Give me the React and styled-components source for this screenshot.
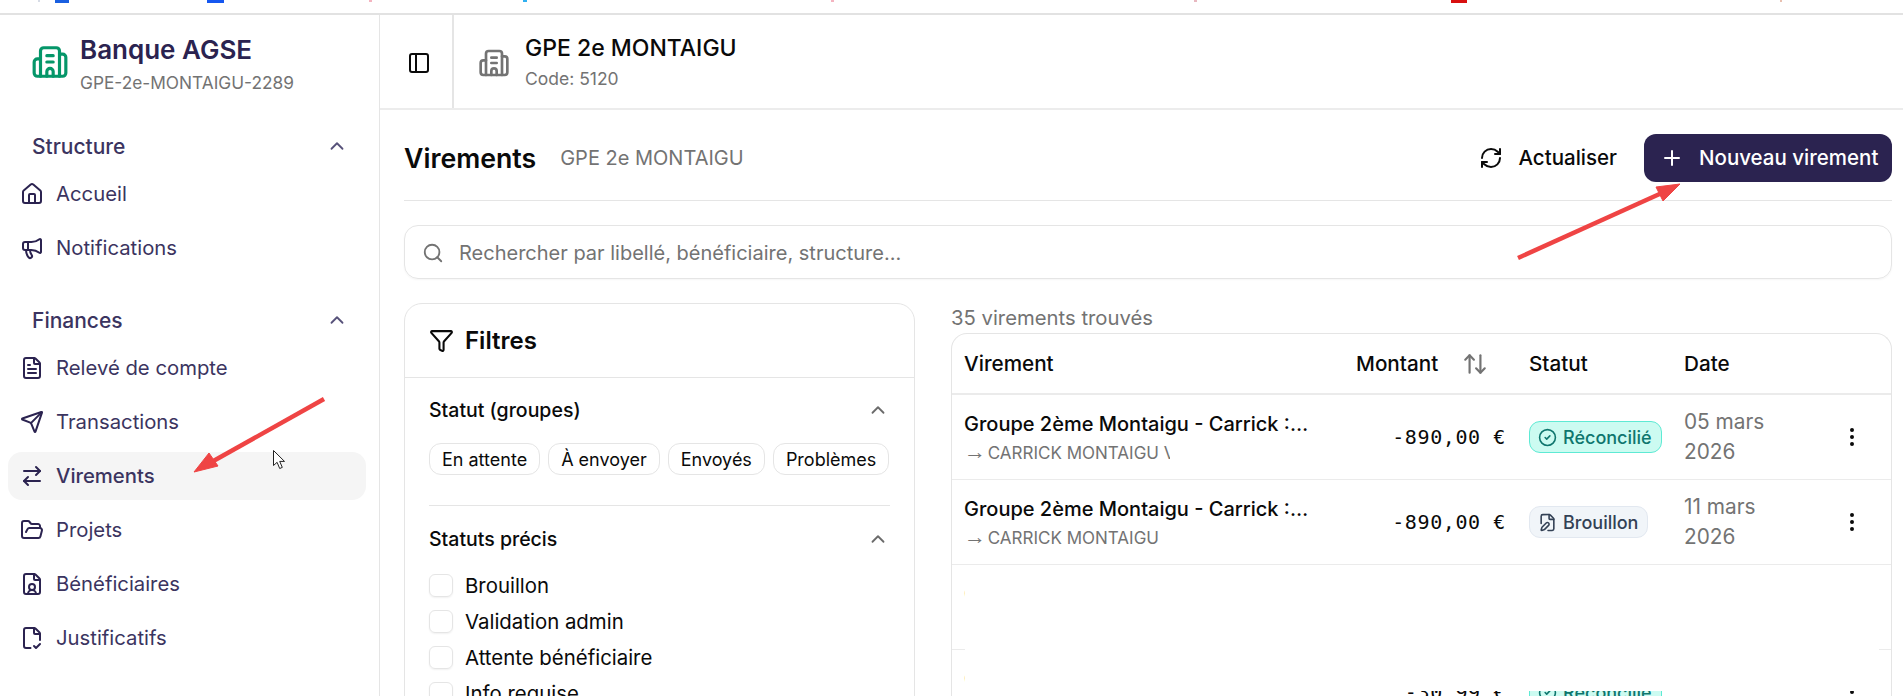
import React from 'react';
import styled, {createGlobalStyle} from 'styled-components';
import {
  ArrowRightLeft,
  ArrowUpDown,
  Building2,
  ChevronUp,
  CircleCheck,
  EllipsisVertical,
  FileCheck2,
  FilePen,
  FileText,
  FileUser,
  FolderOpen,
  Funnel,
  House,
  Megaphone,
  PanelLeft,
  Plus,
  RefreshCw,
  Search,
  Send,
} from 'lucide-react';

const ink = '#2b2350';
const line = '#e5e5e5';
const muted = '#737373';

const GlobalStyle = createGlobalStyle`
  html, body {
    margin: 0;
    height: 696px;
    overflow: hidden;
    background: #fff;
    font-family: Inter, "Noto Sans", sans-serif;
    color: #0a0a0a;
  }
  * { box-sizing: border-box; }
`;

const Page = styled.div`
  position: relative;
  width: 1903px;
  height: 696px;
  overflow: hidden;
`;

// what is left of the browser bookmark bar above the capture
const Strip = styled.div`
  position: relative;
  height: 15px;
  border-bottom: 2px solid #e2e2e2;
`;

const StripMark = styled.span`
  position: absolute;
  top: 0;
  height: ${(p) => (p.$w > 5 ? 3 : 2)}px;
  left: ${(p) => p.$x}px;
  width: ${(p) => p.$w}px;
  background: ${(p) => p.$color};
`;

const Shell = styled.div`
  display: flex;
  height: 681px;
`;

const Sidebar = styled.aside`
  width: 380px;
  flex: none;
  border-right: 1px solid ${line};
  padding: 0 13px 0 8px;
`;

const Brand = styled.div`
  height: 111px;
  display: flex;
  gap: 11px;
  padding: 20px 0 0 23px;
  color: #059669;
  svg {
    margin-top: 8px;
  }
`;

const BrandName = styled.div`
  font-size: 26px;
  font-weight: 600;
  line-height: 30px;
  color: ${ink};
`;

const BrandCode = styled.div`
  font-size: 17.3px;
  line-height: 24px;
  margin-top: 6px;
  color: ${muted};
`;

const SectionLabel = styled.div`
  height: 40px;
  margin: ${(p) => (p.$first ? '0' : '28px')} 0 4px;
  padding: 0 18px 0 24px;
  display: flex;
  align-items: center;
  justify-content: space-between;
  font-size: 21px;
  font-weight: 500;
  color: #3b3460;
  svg {
    color: #57527a;
  }
`;

const NavList = styled.div`
  display: flex;
  flex-direction: column;
  gap: 6px;
`;

const NavItem = styled.div`
  height: 48px;
  display: flex;
  align-items: center;
  gap: 12px;
  padding: 0 0 1px 12px;
  border-radius: 14px;
  font-size: 20.3px;
  color: #3b3460;
  background: ${(p) => (p.$active ? '#f5f5f5' : 'transparent')};
  font-weight: ${(p) => (p.$active ? 500 : 400)};
  svg {
    color: ${ink};
  }
`;

const Main = styled.main`
  flex: 1;
  min-width: 0;
`;

const TopBar = styled.header`
  height: 95px;
  display: flex;
  align-items: stretch;
  border-bottom: 2px solid #ececec;
`;

const ToggleCell = styled.div`
  width: 74px;
  display: flex;
  align-items: center;
  justify-content: center;
  border-right: 2px solid ${line};
  padding: 2px 0 0 6px;
`;

const TopBarInfo = styled.div`
  display: flex;
  gap: 15px;
  padding: 2px 0 0 24px;
  align-items: center;
  svg {
    color: ${muted};
  }
`;

const TopBarTitle = styled.div`
  font-size: 23px;
  font-weight: 500;
  line-height: 28px;
`;

const TopBarCode = styled.div`
  font-size: 17.5px;
  line-height: 24px;
  margin-top: 5px;
  color: ${muted};
`;

const Content = styled.div`
  padding: 0 11px 0 24px;
`;

const TitleRow = styled.div`
  height: 91px;
  padding-top: 24px;
  padding-bottom: 19px;
  display: flex;
  align-items: center;
  border-bottom: 1px solid ${line};
`;

const PageTitle = styled.h1`
  margin: 0;
  font-size: 26.7px;
  font-weight: 600;
`;

const PageSub = styled.span`
  margin-left: 24px;
  font-size: 20px;
  color: ${muted};
`;

const RefreshButton = styled.button`
  margin-left: auto;
  height: 48px;
  border: 0;
  background: none;
  display: flex;
  align-items: center;
  gap: 16px;
  padding: 0;
  font: 500 20.5px Inter, sans-serif;
  color: #0a0a0a;
`;

const PrimaryButton = styled.button`
  margin-left: 27px;
  width: 248px;
  height: 48px;
  border: 0;
  border-radius: 12px;
  background: ${ink};
  color: #fff;
  display: flex;
  align-items: center;
  gap: 15px;
  padding: 0 0 0 16px;
  font: 500 20.5px Inter, sans-serif;
  white-space: nowrap;
`;

const SearchBox = styled.div`
  margin-top: 24px;
  height: 54px;
  border: 1px solid ${line};
  border-radius: 14px;
  box-shadow: 0 1px 2px rgba(0, 0, 0, 0.04);
  display: flex;
  align-items: center;
  gap: 15px;
  padding: 1px 0 0 17px;
  font-size: 20px;
  color: ${muted};
`;

const Columns = styled.div`
  margin-top: 24px;
  display: flex;
  gap: 36px;
  align-items: flex-start;
`;

const FilterCard = styled.section`
  width: 511px;
  flex: none;
  height: 500px;
  border: 1px solid ${line};
  border-radius: 18px;
`;

const FilterHead = styled.div`
  height: 74px;
  padding-left: 24px;
  display: flex;
  align-items: center;
  gap: 11px;
  border-bottom: 1px solid ${line};
  font-size: 24px;
  font-weight: 600;
`;

const FilterBody = styled.div`
  padding: 0 24px;
`;

const FilterGroup = styled.div`
  padding: ${(p) => (p.$last ? 19 : 18)}px 0 30px;
  border-bottom: ${(p) => (p.$last ? 'none' : `1px solid ${line}`)};
`;

const GroupTitle = styled.div`
  height: 28px;
  padding-right: 1px;
  display: flex;
  align-items: center;
  justify-content: space-between;
  font-size: 19.5px;
  font-weight: 500;
  margin-bottom: 19px;
  svg {
    color: #6b6b6b;
  }
`;

const ChipRow = styled.div`
  display: flex;
  gap: 8px;
`;

const Chip = styled.span`
  height: 32px;
  padding: 0 12px;
  display: flex;
  align-items: center;
  border: 1px solid ${line};
  border-radius: 12px;
  font-size: 18px;
  white-space: nowrap;
`;

const CheckList = styled.div`
  display: flex;
  flex-direction: column;
  gap: 13px;
  padding-top: 2px;
`;

const CheckRow = styled.label`
  height: 23px;
  display: flex;
  align-items: center;
  gap: 12px;
  font-size: 20.4px;
`;

const CheckBox = styled.span`
  width: 24px;
  height: 23px;
  flex: none;
  border: 1px solid ${line};
  border-radius: 6px;
  box-shadow: 0 1px 2px rgba(0, 0, 0, 0.06);
`;

const Results = styled.section`
  flex: 1;
  min-width: 0;
`;

const ResultCount = styled.div`
  height: 30px;
  line-height: 30px;
  font-size: 20.3px;
  color: ${muted};
`;

const TableCard = styled.div`
  position: relative;
  height: 400px;
  border: 1px solid ${line};
  border-bottom: 0;
  border-radius: 16px 16px 0 0;
`;

const Row = styled.div`
  display: grid;
  grid-template-columns: 380px 173px 155px 150px 1fr;
  align-items: center;
  height: ${(p) => (p.$head ? '61px' : '85px')};
  border-bottom: ${(p) => (p.$head ? 2 : 1)}px solid #ebebeb;
  padding-left: 12px;
`;

const HeadCell = styled.div`
  display: flex;
  align-items: center;
  gap: 24px;
  font-size: 20.7px;
  font-weight: 500;
  padding-left: ${(p) => (p.$flush ? 0 : 12)}px;
  svg {
    color: ${muted};
  }
`;

const Label = styled.div`
  width: 346px;
  font-size: 20px;
  font-weight: 500;
  line-height: 28px;
  white-space: nowrap;
  overflow: hidden;
  text-overflow: ellipsis;
`;

const Beneficiary = styled.div`
  width: 206px;
  margin-top: 3px;
  font-size: 17px;
  line-height: 24px;
  color: ${muted};
  white-space: nowrap;
  overflow: hidden;
`;

const BeneficiaryArrow = styled.span`
  font-family: "Liberation Sans", sans-serif;
  font-size: 22px;
  line-height: 1;
  margin-right: -3px;
`;

const Amount = styled.div`
  padding-right: 11px;
  text-align: right;
  font-family: "DejaVu Sans Mono", "Liberation Mono", monospace;
  font-size: 20px;
  letter-spacing: 0.6px;
  white-space: nowrap;
`;

const StatusCell = styled.div`
  padding-left: 12px;
`;

const Badge = styled.span`
  display: inline-flex;
  align-items: center;
  gap: 6px;
  height: 32px;
  padding: 0 9px 0 8px;
  border-radius: 11px;
  font-size: 18px;
  font-weight: 500;
  border: 1px solid ${(p) => (p.$kind === 'ok' ? '#5eead4' : '#e2e8f0')};
  background: ${(p) => (p.$kind === 'ok' ? '#ccfbf1' : '#f1f5f9')};
  color: ${(p) => (p.$kind === 'ok' ? '#0f766e' : '#334155')};
`;

const DateCell = styled.div`
  padding-left: 12px;
  width: 110px;
  font-size: 20.8px;
  line-height: 30px;
  color: ${muted};
`;

const ActionCell = styled.div`
  display: flex;
  padding-left: 18px;
`;

// the capture caught these two rows half painted
const UnpaintedArea = styled.div`
  position: absolute;
  left: 13px;
  right: 12px;
  top: 231px;
  height: 126px;
  background: #fff;
`;

const Annotations = styled.svg`
  position: absolute;
  inset: 0;
  pointer-events: none;
`;

const stripMarks = [
  {x: 38, w: 2, color: '#d7dce6'},
  {x: 55, w: 14, color: '#1a5fe0'},
  {x: 207, w: 17, color: '#1557f0'},
  {x: 369, w: 3, color: '#f4b4c0'},
  {x: 523, w: 4, color: '#30b0f0'},
  {x: 831, w: 3, color: '#f4b4c0'},
  {x: 1194, w: 3, color: '#e8b8c0'},
  {x: 1451, w: 16, color: '#d81010'},
  {x: 1780, w: 2, color: '#e8c0b0'},
];

const structureLinks = [
  {icon: House, label: 'Accueil'},
  {icon: Megaphone, label: 'Notifications'},
];

const financeLinks = [
  {icon: FileText, label: 'Relevé de compte'},
  {icon: Send, label: 'Transactions'},
  {icon: ArrowRightLeft, label: 'Virements', active: true},
  {icon: FolderOpen, label: 'Projets'},
  {icon: FileUser, label: 'Bénéficiaires'},
  {icon: FileCheck2, label: 'Justificatifs'},
];

const chips = ['En attente', 'À envoyer', 'Envoyés', 'Problèmes'];
const statuses = ['Brouillon', 'Validation admin', 'Attente bénéficiaire', 'Info requise'];

const transfers = [
  {to: 'CARRICK MONTAIGU VIREMENT', amount: '-890,00 €', kind: 'ok', date: '05 mars 2026'},
  {to: 'CARRICK MONTAIGU', amount: '-890,00 €', kind: 'draft', date: '11 mars 2026'},
  {to: 'CARRICK MONTAIGU', amount: '-30,99 €', kind: 'ok', date: '02 mars 2026'},
  {to: 'CARRICK MONTAIGU', amount: '-30,99 €', kind: 'ok', date: '02 mars 2026'},
];

const NavLinks = ({links}) => (
  <NavList>
    {links.map(({icon: Icon, label, active}) => (
      <NavItem key={label} $active={active}>
        <Icon size={24} strokeWidth={2} />
        {label}
      </NavItem>
    ))}
  </NavList>
);

const StatusBadge = ({kind}) =>
  kind === 'ok' ? (
    <Badge $kind="ok">
      <CircleCheck size={19} />
      Réconcilié
    </Badge>
  ) : (
    <Badge $kind="draft">
      <FilePen size={19} />
      Brouillon
    </Badge>
  );

const App = () => {
  return (
    <Page>
      <GlobalStyle />
      <Strip>
        {stripMarks.map((mark) => (
          <StripMark key={mark.x} $x={mark.x} $w={mark.w} $color={mark.color} />
        ))}
      </Strip>
      <Shell>
        <Sidebar>
          <Brand>
            <Building2 size={38} strokeWidth={2} />
            <div>
              <BrandName>Banque AGSE</BrandName>
              <BrandCode>GPE-2e-MONTAIGU-2289</BrandCode>
            </div>
          </Brand>
          <SectionLabel $first>
            Structure
            <ChevronUp size={22} />
          </SectionLabel>
          <NavLinks links={structureLinks} />
          <SectionLabel>
            Finances
            <ChevronUp size={22} />
          </SectionLabel>
          <NavLinks links={financeLinks} />
        </Sidebar>
        <Main>
          <TopBar>
            <ToggleCell>
              <PanelLeft size={24} strokeWidth={2} />
            </ToggleCell>
            <TopBarInfo>
              <Building2 size={32} strokeWidth={2} />
              <div>
                <TopBarTitle>GPE 2e MONTAIGU</TopBarTitle>
                <TopBarCode>Code: 5120</TopBarCode>
              </div>
            </TopBarInfo>
          </TopBar>
          <Content>
            <TitleRow>
              <PageTitle>Virements</PageTitle>
              <PageSub>GPE 2e MONTAIGU</PageSub>
              <RefreshButton>
                <RefreshCw size={24} />
                Actualiser
              </RefreshButton>
              <PrimaryButton>
                <Plus size={24} />
                Nouveau virement
              </PrimaryButton>
            </TitleRow>
            <SearchBox>
              <Search size={22} />
              Rechercher par libellé, bénéficiaire, structure...
            </SearchBox>
            <Columns>
              <FilterCard>
                <FilterHead>
                  <Funnel size={25} />
                  Filtres
                </FilterHead>
                <FilterBody>
                  <FilterGroup>
                    <GroupTitle>
                      Statut (groupes)
                      <ChevronUp size={22} />
                    </GroupTitle>
                    <ChipRow>
                      {chips.map((chip) => (
                        <Chip key={chip}>{chip}</Chip>
                      ))}
                    </ChipRow>
                  </FilterGroup>
                  <FilterGroup $last>
                    <GroupTitle>
                      Statuts précis
                      <ChevronUp size={22} />
                    </GroupTitle>
                    <CheckList>
                      {statuses.map((status) => (
                        <CheckRow key={status}>
                          <CheckBox />
                          {status}
                        </CheckRow>
                      ))}
                    </CheckList>
                  </FilterGroup>
                </FilterBody>
              </FilterCard>
              <Results>
                <ResultCount>35 virements trouvés</ResultCount>
                <TableCard>
                  <Row $head>
                    <HeadCell $flush>Virement</HeadCell>
                    <HeadCell>
                      Montant
                      <ArrowUpDown size={26} />
                    </HeadCell>
                    <HeadCell>Statut</HeadCell>
                    <HeadCell>Date</HeadCell>
                    <div />
                  </Row>
                  {transfers.map((transfer, index) => (
                    <Row key={index}>
                      <div>
                        <Label>Groupe 2ème Montaigu - Carrick :Camp</Label>
                        <Beneficiary>
                          <BeneficiaryArrow>→</BeneficiaryArrow> {transfer.to}
                        </Beneficiary>
                      </div>
                      <Amount>{transfer.amount}</Amount>
                      <StatusCell>
                        <StatusBadge kind={transfer.kind} />
                      </StatusCell>
                      <DateCell>{transfer.date}</DateCell>
                      <ActionCell>
                        <EllipsisVertical size={24} />
                      </ActionCell>
                    </Row>
                  ))}
                  <UnpaintedArea />
                </TableCard>
              </Results>
            </Columns>
          </Content>
        </Main>
      </Shell>
      <Annotations width="1903" height="696" viewBox="0 0 1903 696">
        <g fill="#ef4444" stroke="#ef4444" strokeWidth="1">
          <line x1="324" y1="399" x2="208" y2="464" strokeWidth="4.5" />
          <polygon points="194,472 209,453 218,466" />
          <line x1="1518" y1="258" x2="1664" y2="192" strokeWidth="4.5" />
          <polygon points="1680,184 1656,187 1663,201" />
        </g>
        <path
          d="M273.5 450.5v15l3.6-3.2 2.6 6.2 2.6-1.1-2.6-6h4.8z"
          fill="#fff"
          stroke="#222"
          strokeWidth="1"
        />
      </Annotations>
    </Page>
  );
};

export default App;
